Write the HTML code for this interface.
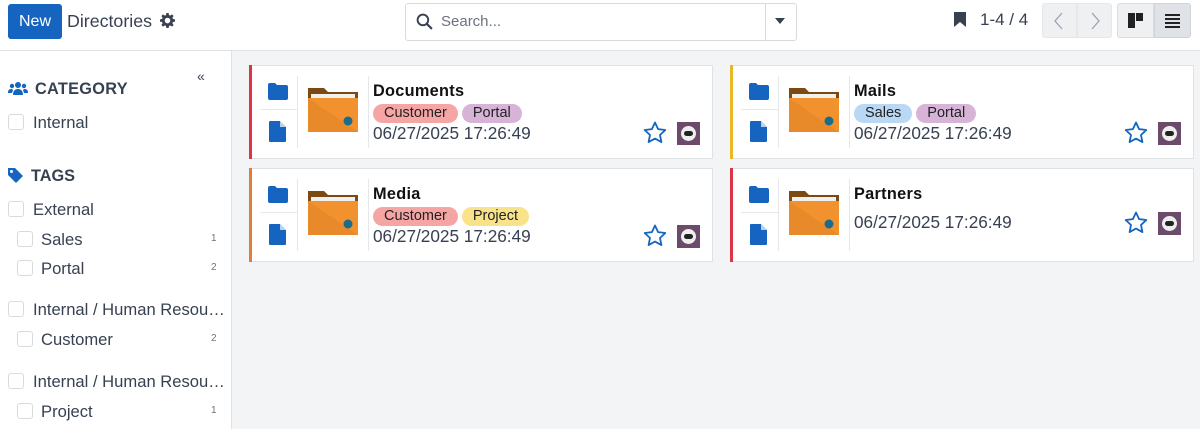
<!DOCTYPE html><html><head><style>
*{box-sizing:border-box;margin:0;padding:0}
body{width:1200px;height:429px;overflow:hidden;background:#fff;font-family:"Liberation Sans",sans-serif;color:#374151;position:relative}
.a{position:absolute}
.cb{position:absolute;width:16px;height:16px;border:1px solid #d8dadd;border-radius:3px;background:#fff}
.sl{position:absolute;font-size:16.6px;color:#374151}
.cnt{position:absolute;left:211px;font-size:10px;color:#6b7280}
.card{position:absolute;width:464px;height:94px;background:#fff;border:1px solid #dee2e6;}
.bar{position:absolute;left:-1px;top:-1px;bottom:-1px;width:3px}
.tag{display:inline-block;height:19px;line-height:19px;padding:0 11px;border-radius:10px;font-size:14.5px;color:#222;margin-right:4px}
.ttl{position:absolute;left:123px;top:16px;font-size:16.3px;font-weight:bold;color:#111;letter-spacing:.3px}
.tags{position:absolute;left:123px;top:38px}
.date{position:absolute;left:123px;top:57px;font-size:17.2px;color:#374151}
</style></head><body>
<div class="a" style="left:8px;top:4px;width:54px;height:35px;background:#1565c0;border-radius:3px;color:#fff;font-size:16px;line-height:35px;text-align:center">New</div>
<div class="a" style="left:67px;top:11px;font-size:17.8px;color:#374151">Directories</div>
<svg class="a" style="left:160px;top:13px" width="15" height="15" viewBox="0 0 16 16"><path fill="#374151" d="M8 5a3 3 0 100 6 3 3 0 000-6zM6.8 0h2.4l.4 2.2 1.3.6 1.9-1.3 1.7 1.7-1.3 1.9.6 1.3 2.2.4v2.4l-2.2.4-.6 1.3 1.3 1.9-1.7 1.7-1.9-1.3-1.3.6-.4 2.2H6.8l-.4-2.2-1.3-.6-1.9 1.3-1.7-1.7 1.3-1.9-.6-1.3L0 9.2V6.8l2.2-.4.6-1.3-1.3-1.9 1.7-1.7 1.9 1.3 1.3-.6z"/><circle cx="8" cy="8" r="2.2" fill="#fff"/></svg>
<div class="a" style="left:405px;top:3px;width:392px;height:38px;border:1px solid #d8dadd;border-radius:3px"></div>
<svg class="a" style="left:416px;top:13px" width="17" height="17" viewBox="0 0 16 16"><circle cx="6.5" cy="6.5" r="5" fill="none" stroke="#374151" stroke-width="1.8"/><path d="M10.2 10.2L15 15" stroke="#374151" stroke-width="2"/></svg>
<div class="a" style="left:441px;top:13px;font-size:15px;color:#6b7280">Search...</div>
<div class="a" style="left:765px;top:4px;width:1px;height:36px;background:#d8dadd"></div>
<svg class="a" style="left:775px;top:18px" width="10" height="6"><path d="M0 0h10L5 6z" fill="#374151"/></svg>
<svg class="a" style="left:954px;top:12px" width="12" height="15" viewBox="0 0 12 15"><path d="M0 0h12v15L6 10 0 15z" fill="#374151"/></svg>
<div class="a" style="left:980px;top:10px;font-size:17px;color:#374151">1-4 / 4</div>
<div class="a" style="left:1042px;top:3px;width:35px;height:35px;background:#eef0f2;border:1px solid #e5e7eb;border-radius:3px 0 0 3px"></div>
<div class="a" style="left:1077px;top:3px;width:35px;height:35px;background:#eef0f2;border:1px solid #e5e7eb;border-radius:0 3px 3px 0"></div>
<svg class="a" style="left:1053px;top:12px" width="12" height="18"><path d="M9 1L2 9l7 8" fill="none" stroke="#9ca3af" stroke-width="1.3"/></svg>
<svg class="a" style="left:1089px;top:12px" width="12" height="18"><path d="M3 1l7 8-7 8" fill="none" stroke="#9ca3af" stroke-width="1.3"/></svg>
<div class="a" style="left:1117px;top:3px;width:37px;height:35px;background:#eef0f2;border:1px solid #dadde1;border-radius:3px 0 0 3px"></div>
<div class="a" style="left:1154px;top:3px;width:37px;height:35px;background:#dfe2e6;border:1px solid #d0d4d9;border-radius:0 3px 3px 0"></div>
<svg class="a" style="left:1128px;top:13px" width="16" height="16"><rect x="0" y="0" width="7" height="15" fill="#222"/><rect x="8" y="0" width="7" height="8" fill="#222"/></svg>
<svg class="a" style="left:1165px;top:14px" width="16" height="14"><rect y="0" width="15" height="2" fill="#222"/><rect y="4" width="15" height="2" fill="#222"/><rect y="8" width="15" height="2" fill="#222"/><rect y="12" width="15" height="2" fill="#222"/></svg>
<div class="a" style="left:0;top:50px;width:1200px;height:1px;background:#dee2e6"></div>
<div class="a" style="left:231px;top:51px;width:969px;height:378px;background:#f3f4f6;border-left:1px solid #dee2e6"></div>
<div class="a" style="left:197px;top:68px;font-size:14px;color:#374151">«</div>
<svg class="a" style="left:8px;top:81px" width="20" height="15" viewBox="0 0 20 15"><circle cx="10" cy="4" r="3" fill="#1565c0"/><circle cx="4" cy="5" r="2.2" fill="#1565c0"/><circle cx="16" cy="5" r="2.2" fill="#1565c0"/><path d="M5 14c0-4 2-6 5-6s5 2 5 6z M0 12c0-3 1-4 4-4l1 1-1 3z M20 12c0-3-1-4-4-4l-1 1 1 3z" fill="#1565c0"/></svg>
<div class="a" style="left:35px;top:80px;font-size:16.3px;font-weight:bold;color:#374151;letter-spacing:.3px">CATEGORY</div>
<div class="cb" style="left:8px;top:114px"></div><div class="sl" style="left:33px;top:113px">Internal</div>
<svg class="a" style="left:8px;top:168px" width="15" height="15" viewBox="0 0 15 15"><path d="M0 0h7l8 8-7 7-8-8z" fill="#1565c0"/><circle cx="3.5" cy="3.5" r="1.5" fill="#fff"/></svg>
<div class="a" style="left:31px;top:167px;font-size:16.3px;font-weight:bold;color:#374151">TAGS</div>
<div class="cb" style="left:8px;top:201px"></div><div class="sl" style="left:33px;top:200px">External</div>
<div class="cb" style="left:17px;top:231px"></div><div class="sl" style="left:41px;top:230px">Sales</div><div class="cnt" style="top:233px">1</div>
<div class="cb" style="left:17px;top:260px"></div><div class="sl" style="left:41px;top:259px">Portal</div><div class="cnt" style="top:262px">2</div>
<div class="cb" style="left:8px;top:301px"></div><div class="sl" style="left:33px;top:300px">Internal / Human Resou…</div>
<div class="cb" style="left:17px;top:331px"></div><div class="sl" style="left:41px;top:330px">Customer</div><div class="cnt" style="top:333px">2</div>
<div class="cb" style="left:8px;top:373px"></div><div class="sl" style="left:33px;top:372px">Internal / Human Resou…</div>
<div class="cb" style="left:17px;top:403px"></div><div class="sl" style="left:41px;top:402px">Project</div><div class="cnt" style="top:405px">1</div>

<div class="card" style="left:249px;top:65px"><div class="bar" style="background:#dc3545"></div>
<div class="a" style="left:10px;top:10px;width:38px;height:72px;border-right:1px solid #e5e7eb"></div>
<div class="a" style="left:10px;top:43px;width:37px;height:1px;background:#e5e7eb"></div>
<svg class="a" style="left:18px;top:17px" width="20" height="17" viewBox="0 0 20 17"><path d="M0 2q0-2 2-2h5l2 2h9q2 0 2 2v11q0 2-2 2H2q-2 0-2-2z" fill="#1565c0"/></svg>
<svg class="a" style="left:19px;top:55px" width="17" height="21" viewBox="0 0 17 21"><path d="M0 1q0-1 1-1h10l6 6v14q0 1-1 1H1q-1 0-1-1z" fill="#1565c0"/><path d="M11 0v6h6" fill="#fff" opacity=".7"/></svg>
<div class="a" style="left:118px;top:10px;width:1px;height:72px;background:#e5e7eb"></div>
<svg class="a" style="left:58px;top:22px" width="50" height="44" viewBox="0 0 50 44"><path d="M0 0h16l4 4h30v40H0z" fill="#7a4a12"/><rect x="3" y="6" width="44" height="8" fill="#f0f0f0"/><rect x="0" y="10" width="50" height="34" fill="#f2922e"/><path d="M0 10l50 34H0z" fill="#e8892a"/><circle cx="40" cy="33" r="4.5" fill="#1a6d8a"/></svg>
<div class="ttl">Documents</div>
<div class="tags"><span class="tag" style="background:#f6a5a5">Customer</span><span class="tag" style="background:#d8b3d8">Portal</span></div>
<div class="date">06/27/2025 17:26:49</div>
<svg class="a" style="left:393px;top:55px" width="24" height="23" viewBox="0 0 24 23"><path d="M12 1.5l3.1 6.6 7.2.9-5.3 5 1.4 7.1L12 17.6l-6.4 3.5 1.4-7.1-5.3-5 7.2-.9z" fill="none" stroke="#1565c0" stroke-width="1.8" stroke-linejoin="round"/></svg>
<div class="a" style="left:427px;top:56px;width:23px;height:23px;background:#6b4a6a"><div class="a" style="left:4px;top:4px;width:15px;height:15px;border-radius:50%;background:#eee"></div><div class="a" style="left:7px;top:9px;width:9px;height:5px;border-radius:3px;background:#222"></div></div>
</div>

<div class="card" style="left:730px;top:65px"><div class="bar" style="background:#e9b824"></div>
<div class="a" style="left:10px;top:10px;width:38px;height:72px;border-right:1px solid #e5e7eb"></div>
<div class="a" style="left:10px;top:43px;width:37px;height:1px;background:#e5e7eb"></div>
<svg class="a" style="left:18px;top:17px" width="20" height="17" viewBox="0 0 20 17"><path d="M0 2q0-2 2-2h5l2 2h9q2 0 2 2v11q0 2-2 2H2q-2 0-2-2z" fill="#1565c0"/></svg>
<svg class="a" style="left:19px;top:55px" width="17" height="21" viewBox="0 0 17 21"><path d="M0 1q0-1 1-1h10l6 6v14q0 1-1 1H1q-1 0-1-1z" fill="#1565c0"/><path d="M11 0v6h6" fill="#fff" opacity=".7"/></svg>
<div class="a" style="left:118px;top:10px;width:1px;height:72px;background:#e5e7eb"></div>
<svg class="a" style="left:58px;top:22px" width="50" height="44" viewBox="0 0 50 44"><path d="M0 0h16l4 4h30v40H0z" fill="#7a4a12"/><rect x="3" y="6" width="44" height="8" fill="#f0f0f0"/><rect x="0" y="10" width="50" height="34" fill="#f2922e"/><path d="M0 10l50 34H0z" fill="#e8892a"/><circle cx="40" cy="33" r="4.5" fill="#1a6d8a"/></svg>
<div class="ttl">Mails</div>
<div class="tags"><span class="tag" style="background:#b8d8f5">Sales</span><span class="tag" style="background:#d8b3d8">Portal</span></div>
<div class="date">06/27/2025 17:26:49</div>
<svg class="a" style="left:393px;top:55px" width="24" height="23" viewBox="0 0 24 23"><path d="M12 1.5l3.1 6.6 7.2.9-5.3 5 1.4 7.1L12 17.6l-6.4 3.5 1.4-7.1-5.3-5 7.2-.9z" fill="none" stroke="#1565c0" stroke-width="1.8" stroke-linejoin="round"/></svg>
<div class="a" style="left:427px;top:56px;width:23px;height:23px;background:#6b4a6a"><div class="a" style="left:4px;top:4px;width:15px;height:15px;border-radius:50%;background:#eee"></div><div class="a" style="left:7px;top:9px;width:9px;height:5px;border-radius:3px;background:#222"></div></div>
</div>

<div class="card" style="left:249px;top:168px"><div class="bar" style="background:#e07d3c"></div>
<div class="a" style="left:10px;top:10px;width:38px;height:72px;border-right:1px solid #e5e7eb"></div>
<div class="a" style="left:10px;top:43px;width:37px;height:1px;background:#e5e7eb"></div>
<svg class="a" style="left:18px;top:17px" width="20" height="17" viewBox="0 0 20 17"><path d="M0 2q0-2 2-2h5l2 2h9q2 0 2 2v11q0 2-2 2H2q-2 0-2-2z" fill="#1565c0"/></svg>
<svg class="a" style="left:19px;top:55px" width="17" height="21" viewBox="0 0 17 21"><path d="M0 1q0-1 1-1h10l6 6v14q0 1-1 1H1q-1 0-1-1z" fill="#1565c0"/><path d="M11 0v6h6" fill="#fff" opacity=".7"/></svg>
<div class="a" style="left:118px;top:10px;width:1px;height:72px;background:#e5e7eb"></div>
<svg class="a" style="left:58px;top:22px" width="50" height="44" viewBox="0 0 50 44"><path d="M0 0h16l4 4h30v40H0z" fill="#7a4a12"/><rect x="3" y="6" width="44" height="8" fill="#f0f0f0"/><rect x="0" y="10" width="50" height="34" fill="#f2922e"/><path d="M0 10l50 34H0z" fill="#e8892a"/><circle cx="40" cy="33" r="4.5" fill="#1a6d8a"/></svg>
<div class="ttl">Media</div>
<div class="tags"><span class="tag" style="background:#f6a5a5">Customer</span><span class="tag" style="background:#f9e38a">Project</span></div>
<div class="date">06/27/2025 17:26:49</div>
<svg class="a" style="left:393px;top:55px" width="24" height="23" viewBox="0 0 24 23"><path d="M12 1.5l3.1 6.6 7.2.9-5.3 5 1.4 7.1L12 17.6l-6.4 3.5 1.4-7.1-5.3-5 7.2-.9z" fill="none" stroke="#1565c0" stroke-width="1.8" stroke-linejoin="round"/></svg>
<div class="a" style="left:427px;top:56px;width:23px;height:23px;background:#6b4a6a"><div class="a" style="left:4px;top:4px;width:15px;height:15px;border-radius:50%;background:#eee"></div><div class="a" style="left:7px;top:9px;width:9px;height:5px;border-radius:3px;background:#222"></div></div>
</div>

<div class="card" style="left:730px;top:168px"><div class="bar" style="background:#dc3545"></div>
<div class="a" style="left:10px;top:10px;width:38px;height:72px;border-right:1px solid #e5e7eb"></div>
<div class="a" style="left:10px;top:43px;width:37px;height:1px;background:#e5e7eb"></div>
<svg class="a" style="left:18px;top:17px" width="20" height="17" viewBox="0 0 20 17"><path d="M0 2q0-2 2-2h5l2 2h9q2 0 2 2v11q0 2-2 2H2q-2 0-2-2z" fill="#1565c0"/></svg>
<svg class="a" style="left:19px;top:55px" width="17" height="21" viewBox="0 0 17 21"><path d="M0 1q0-1 1-1h10l6 6v14q0 1-1 1H1q-1 0-1-1z" fill="#1565c0"/><path d="M11 0v6h6" fill="#fff" opacity=".7"/></svg>
<div class="a" style="left:118px;top:10px;width:1px;height:72px;background:#e5e7eb"></div>
<svg class="a" style="left:58px;top:22px" width="50" height="44" viewBox="0 0 50 44"><path d="M0 0h16l4 4h30v40H0z" fill="#7a4a12"/><rect x="3" y="6" width="44" height="8" fill="#f0f0f0"/><rect x="0" y="10" width="50" height="34" fill="#f2922e"/><path d="M0 10l50 34H0z" fill="#e8892a"/><circle cx="40" cy="33" r="4.5" fill="#1a6d8a"/></svg>
<div class="ttl">Partners</div>
<div class="date" style="top:43px">06/27/2025 17:26:49</div>
<svg class="a" style="left:393px;top:42px" width="24" height="23" viewBox="0 0 24 23"><path d="M12 1.5l3.1 6.6 7.2.9-5.3 5 1.4 7.1L12 17.6l-6.4 3.5 1.4-7.1-5.3-5 7.2-.9z" fill="none" stroke="#1565c0" stroke-width="1.8" stroke-linejoin="round"/></svg>
<div class="a" style="left:427px;top:43px;width:23px;height:23px;background:#6b4a6a"><div class="a" style="left:4px;top:4px;width:15px;height:15px;border-radius:50%;background:#eee"></div><div class="a" style="left:7px;top:9px;width:9px;height:5px;border-radius:3px;background:#222"></div></div>
</div>
</body></html>
